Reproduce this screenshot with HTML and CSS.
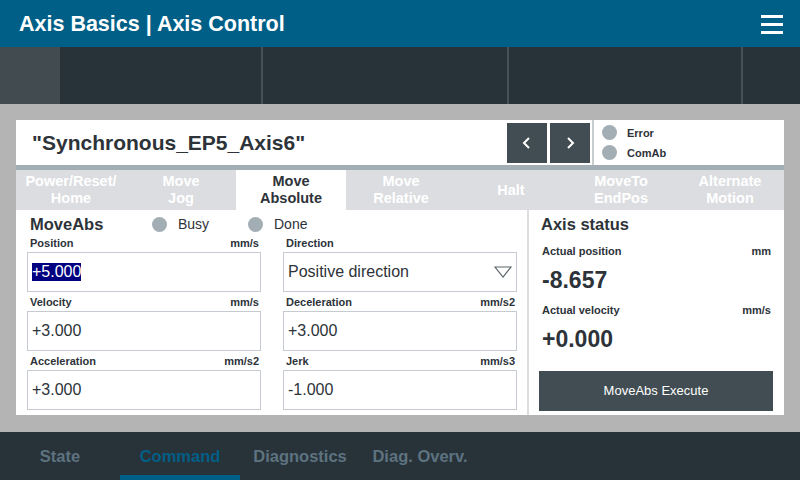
FILE: index.html
```html
<!DOCTYPE html>
<html>
<head>
<meta charset="utf-8">
<link rel="stylesheet" href="styles.css">
</head>
<body>
<div class="screen">
  <header class="topbar">
    <div class="title">Axis Basics | Axis Control</div>
    <div class="burger"><span></span><span></span><span></span></div>
  </header>
  <div class="subbar">
    <div class="sub sub-a"></div>
    <div class="sub sub-b"></div>
    <div class="sub sub-c"></div>
    <div class="sub sub-d"></div>
    <div class="sub sub-e"></div>
  </div>
  <main class="stage">
    <div class="card">
      <div class="cardhead">
        <div class="axisname">"Synchronous_EP5_Axis6"</div>
        <div class="navbtns">
          <button class="nav"><svg width="12" height="14" viewBox="0 0 12 14"><path d="M8 2 L3 7 L8 12" fill="none" stroke="#fff" stroke-width="2"/></svg></button>
          <button class="nav"><svg width="12" height="14" viewBox="0 0 12 14"><path d="M4 2 L9 7 L4 12" fill="none" stroke="#fff" stroke-width="2"/></svg></button>
        </div>
        <div class="leds">
          <div class="ledrow"><span class="led"></span><span>Error</span></div>
          <div class="ledrow"><span class="led"></span><span>ComAb</span></div>
        </div>
      </div>
      <div class="tabs">
        <div class="tab">Power/Reset/<br>Home</div>
        <div class="tab">Move<br>Jog</div>
        <div class="tab active">Move<br>Absolute</div>
        <div class="tab">Move<br>Relative</div>
        <div class="tab">Halt</div>
        <div class="tab">MoveTo<br>EndPos</div>
        <div class="tab">Alternate<br>Motion</div>
      </div>
      <div class="body">
        <section class="left">
          <div class="lefthead">
            <span class="h">MoveAbs</span>
            <span class="stat stat-busy"><span class="led"></span>Busy</span>
            <span class="stat"><span class="led"></span>Done</span>
          </div>
          <div class="grid">
            <div class="field">
              <div class="lbl"><span>Position</span><span>mm/s</span></div>
              <div class="box"><span class="sel">+5.000</span></div>
            </div>
            <div class="field">
              <div class="lbl"><span>Direction</span><span></span></div>
              <div class="box select"><span>Positive direction</span>
                <svg width="18" height="12" viewBox="0 0 18 12"><path d="M1 1 L17 1 L9 11 Z" fill="none" stroke="#5a646b" stroke-width="1.2"/></svg>
              </div>
            </div>
            <div class="field">
              <div class="lbl"><span>Velocity</span><span>mm/s</span></div>
              <div class="box">+3.000</div>
            </div>
            <div class="field">
              <div class="lbl"><span>Deceleration</span><span>mm/s2</span></div>
              <div class="box">+3.000</div>
            </div>
            <div class="field">
              <div class="lbl"><span>Acceleration</span><span>mm/s2</span></div>
              <div class="box">+3.000</div>
            </div>
            <div class="field">
              <div class="lbl"><span>Jerk</span><span>mm/s3</span></div>
              <div class="box">-1.000</div>
            </div>
          </div>
        </section>
        <section class="right">
          <div class="h rh">Axis status</div>
          <div class="lbl rl first"><span>Actual position</span><span>mm</span></div>
          <div class="val">-8.657</div>
          <div class="lbl rl"><span>Actual velocity</span><span>mm/s</span></div>
          <div class="val">+0.000</div>
          <button class="exec">MoveAbs Execute</button>
        </section>
      </div>
    </div>
  </main>
  <footer class="bottom">
    <div class="btab">State</div>
    <div class="btab on">Command</div>
    <div class="btab">Diagnostics</div>
    <div class="btab">Diag. Overv.</div>
  </footer>
</div>
</body>
</html>
```
FILE: styles.css
```css
* { box-sizing: border-box; }
html, body { margin: 0; padding: 0; }
body { width: 800px; height: 480px; overflow: hidden; font-family: "Liberation Sans", Arial, sans-serif; }
.screen { width: 800px; height: 480px; display: flex; flex-direction: column; background: #b4b4b4; }

.topbar { height: 47px; background: #005f87; display: flex; align-items: center; justify-content: space-between; padding: 1px 17px 0 19px; flex: none; }
.title { color: #fff; font-weight: bold; font-size: 21.5px; }
.burger { width: 22px; display: flex; flex-direction: column; gap: 5px; }
.burger span { display: block; height: 3px; background: #fff; }

.subbar { height: 57px; display: flex; background: #283239; flex: none; }
.sub { height: 100%; }
.sub-a { width: 60px; background: #424b50; }
.sub-b { width: 203px; border-right: 2px solid #465159; }
.sub-c { width: 246px; border-right: 2px solid #465159; }
.sub-d { width: 234px; border-right: 2px solid #465159; }
.sub-e { flex: 1; }

.stage { flex: 1; padding: 16px 16px 0; }
.card { width: 768px; background: #fff; }
.cardhead { display: flex; align-items: center; border-bottom: 5px solid #a3aeb4; height: 50px; }
.axisname { flex: 1; padding-left: 16px; font-size: 21px; font-weight: bold; color: #2d3339; }
.navbtns { display: flex; gap: 3px; height: 100%; padding: 3px 2px 2px 0; border-right: 2px solid #c8cdd0; }
.nav { width: 40px; height: 40px; border: 0; background: #414d52; display: flex; align-items: center; justify-content: center; padding: 0; }
.leds { width: 190px; padding-left: 8px; display: flex; flex-direction: column; gap: 5px; }
.ledrow { display: flex; align-items: center; gap: 10px; font-size: 11px; font-weight: bold; color: #2d3339; }
.led { display: inline-block; width: 15px; height: 15px; border-radius: 50%; background: #a3aeb4; }

.tabs { display: flex; height: 40px; background: #dcdde0; }
.tab { width: 110px; display: flex; align-items: center; justify-content: center; text-align: center; color: #fff; font-weight: bold; font-size: 14.5px; line-height: 17px; }
.tab:last-child { width: 108px; }
.tab.active { background: #fff; color: #2d3339; }

.body { display: flex; height: 205px; }
.left { width: 513px; border-right: 2px solid #dcdde0; padding: 4px 11px 0 11px; }
.lefthead { display: flex; align-items: center; height: 20px; }
.h { font-size: 16.5px; font-weight: bold; color: #2d3339; }
.lefthead .h { width: 125px; padding-left: 3px; }
.stat { display: flex; align-items: center; gap: 11px; font-size: 14px; color: #2d3339; width: 96px; }
.grid { display: grid; grid-template-columns: 234px 234px; column-gap: 22px; row-gap: 1px; }
.lbl { display: flex; justify-content: space-between; font-size: 11px; font-weight: bold; color: #2d3339; height: 17px; align-items: center; padding: 0 2px 0 3px; }
.box { height: 40px; border: 1px solid #c5cbd0; display: flex; align-items: center; padding-left: 4px; font-size: 16px; color: #2d3339; margin-top: 1px; }
.sel { background: #000080; color: #fff; }
.select { justify-content: space-between; padding-right: 4px; }

.right { flex: 1; padding: 4px 11px 0 10px; }
.rh { padding-left: 2px; height: 20px; line-height: 20px; }
.rl.first { margin-top: 8.5px; }
.val { font-size: 23px; font-weight: bold; color: #2d3339; padding-left: 3px; height: 42px; display: flex; align-items: center; }
.exec { margin-top: 10px; width: 234px; height: 40px; border: 0; background: #414d52; color: #fff; font-family: inherit; font-size: 13px; }

.bottom { height: 48px; background: #283239; display: flex; flex: none; margin-top: 17px; }
.btab { width: 120px; display: flex; align-items: center; justify-content: center; color: #5d7380; font-weight: bold; font-size: 16.5px; border-bottom: 5px solid transparent; padding-top: 5px; }
.btab.on { color: #005f87; border-bottom-color: #005f87; }
```
